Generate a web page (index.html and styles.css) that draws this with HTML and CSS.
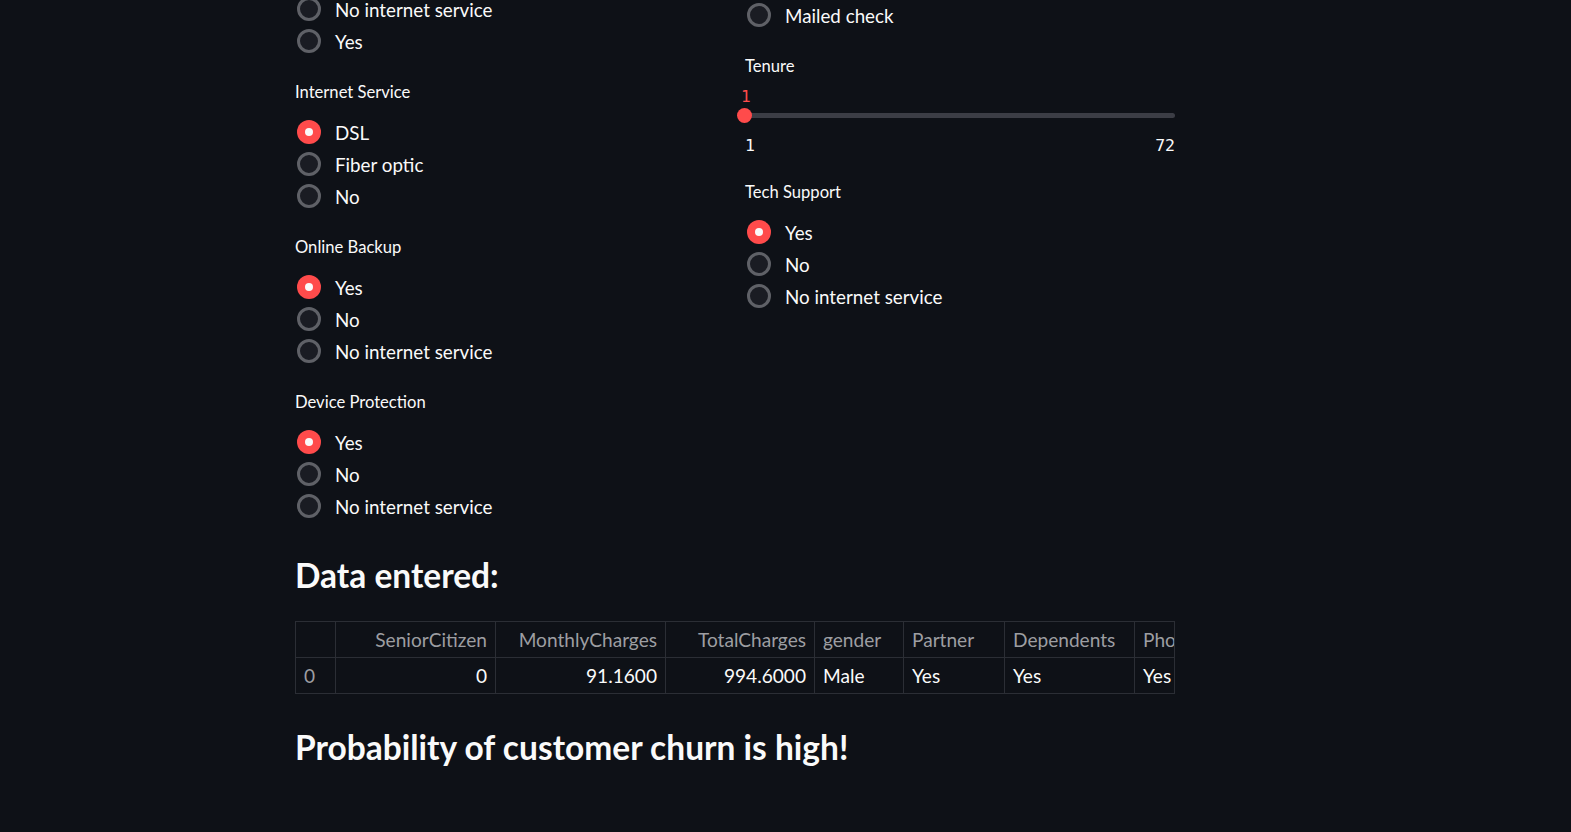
FILE: index.html
```html
<!DOCTYPE html>
<html lang="en">
<head>
<meta charset="utf-8">
<title>Customer churn</title>
<link rel="stylesheet" href="styles.css">
</head>
<body>
<main class="main">
  <div class="columns">
    <div class="col col-left">
      <div class="widget">
        <div class="options">
          <div class="opt"><span class="dot"></span><span>No internet service</span></div>
          <div class="opt"><span class="dot"></span><span>Yes</span></div>
        </div>
      </div>
      <div class="widget">
        <div class="label">Internet Service</div>
        <div class="options">
          <div class="opt"><span class="dot on"></span><span>DSL</span></div>
          <div class="opt"><span class="dot"></span><span>Fiber optic</span></div>
          <div class="opt"><span class="dot"></span><span>No</span></div>
        </div>
      </div>
      <div class="widget">
        <div class="label">Online Backup</div>
        <div class="options">
          <div class="opt"><span class="dot on"></span><span>Yes</span></div>
          <div class="opt"><span class="dot"></span><span>No</span></div>
          <div class="opt"><span class="dot"></span><span>No internet service</span></div>
        </div>
      </div>
      <div class="widget">
        <div class="label">Device Protection</div>
        <div class="options">
          <div class="opt"><span class="dot on"></span><span>Yes</span></div>
          <div class="opt"><span class="dot"></span><span>No</span></div>
          <div class="opt"><span class="dot"></span><span>No internet service</span></div>
        </div>
      </div>
    </div>
    <div class="col col-right">
      <div class="widget">
        <div class="options">
          <div class="opt"><span class="dot"></span><span>Mailed check</span></div>
        </div>
      </div>
      <div class="widget">
        <div class="label label-slider">Tenure</div>
        <div class="slider">
          <div class="track"></div>
          <div class="thumb-value">1</div>
          <div class="thumb"></div>
        </div>
        <div class="ticks"><span>1</span><span>72</span></div>
      </div>
      <div class="widget">
        <div class="label">Tech Support</div>
        <div class="options">
          <div class="opt"><span class="dot on"></span><span>Yes</span></div>
          <div class="opt"><span class="dot"></span><span>No</span></div>
          <div class="opt"><span class="dot"></span><span>No internet service</span></div>
        </div>
      </div>
    </div>
  </div>

  <h3 class="heading heading-data">Data entered:</h3>

  <div class="table-wrap">
    <table class="df">
      <colgroup>
        <col class="w-idx"><col class="w-senior"><col class="w-monthly"><col class="w-total">
        <col class="w-gender"><col class="w-partner"><col class="w-dep"><col class="w-phone">
      </colgroup>
      <thead>
        <tr>
          <th class="idx"></th>
          <th class="num">SeniorCitizen</th>
          <th class="num">MonthlyCharges</th>
          <th class="num">TotalCharges</th>
          <th>gender</th>
          <th>Partner</th>
          <th>Dependents</th>
          <th>PhoneService</th>
        </tr>
      </thead>
      <tbody>
        <tr>
          <th class="idx">0</th>
          <td class="num">0</td>
          <td class="num">91.1600</td>
          <td class="num">994.6000</td>
          <td>Male</td>
          <td>Yes</td>
          <td>Yes</td>
          <td>Yes</td>
        </tr>
      </tbody>
    </table>
  </div>

  <h3 class="heading heading-result">Probability of customer churn is high!</h3>
</main>
</body>
</html>
```

FILE: styles.css
```css
html, body {
  margin: 0;
  padding: 0;
  background: #0e1117;
  height: 100%;
  overflow: hidden;
}

body {
  color: #fafafa;
  font-family: "Lato", "Open Sans", sans-serif;
}

.main {
  width: 880px;
  margin-left: 295px;
}

.columns {
  display: flex;
  gap: 20px;
  align-items: flex-start;
}

.col {
  width: 430px;
  flex: none;
}

.col-left {
  margin-top: -7px;
}

.col-right {
  margin-top: -1px;
}

.widget {
  margin-bottom: 24px;
}

.widget:last-child {
  margin-bottom: 0;
}

.label {
  font-size: 16.6px;
  line-height: 22px;
  height: 22px;
  margin-bottom: 13px;
}

.label-slider {
  margin-bottom: 0;
}

.opt {
  height: 32px;
  display: flex;
  align-items: center;
  gap: 14px;
  font-size: 18.8px;
}

.dot {
  width: 24px;
  height: 24px;
  box-sizing: border-box;
  border-radius: 50%;
  border: 3px solid #5f6167;
  background: #1a1c23;
  margin-left: 2px;
  flex: none;
  display: flex;
  align-items: center;
  justify-content: center;
}

.dot.on {
  border: none;
  background: #ff4b4b;
}

.dot.on::after {
  content: "";
  width: 8px;
  height: 8px;
  border-radius: 50%;
  background: #fafafa;
}

/* slider */
.slider {
  position: relative;
  height: 52px;
  padding-top: 36px;
  box-sizing: border-box;
}

.track {
  height: 5px;
  border-radius: 3px;
  background: #3b3d45;
}

.thumb {
  position: absolute;
  left: -8px;
  top: 31px;
  width: 15px;
  height: 15px;
  border-radius: 50%;
  background: #ff4b4b;
}

.thumb-value {
  position: absolute;
  left: -4px;
  top: 10px;
  line-height: 20px;
  font-family: "DejaVu Sans Mono", "Liberation Mono", monospace;
  font-size: 16px;
  color: #ff4b4b;
}

.ticks {
  height: 28px;
  line-height: 33px;
  display: flex;
  justify-content: space-between;
  font-family: "DejaVu Sans Mono", "Liberation Mono", monospace;
  font-size: 16.5px;
  color: #fafafa;
}

/* headings */
.heading {
  margin: 0;
  font-size: 33.5px;
  line-height: 44px;
  font-weight: 700;
  color: #fafafa;
}

.heading-data {
  margin-top: 31px;
}

.heading-result {
  margin-top: 31px;
}

/* table */
.table-wrap {
  margin-top: 24px;
  width: 880px;
  overflow: hidden;
  box-sizing: border-box;
  border-right: 1px solid #2b2e35;
}

.df {
  border-collapse: collapse;
  table-layout: fixed;
  width: 1000px;
  font-size: 19.1px;
}

.df th,
.df td {
  height: 35px;
  padding: 0 8px;
  border: 1px solid #2b2e35;
  text-align: left;
  font-weight: 400;
  white-space: nowrap;
  overflow: hidden;
  line-height: 35px;
}

.df thead th {
  color: #9d9ea2;
}

.df tbody td {
  color: #fafafa;
}

.df th.idx {
  color: #9d9ea2;
}

.df .num {
  text-align: right;
}

.w-idx { width: 40px; }
.w-senior { width: 160px; }
.w-monthly { width: 170px; }
.w-total { width: 149px; }
.w-gender { width: 89px; }
.w-partner { width: 101px; }
.w-dep { width: 130px; }
.w-phone { width: 161px; }
```
